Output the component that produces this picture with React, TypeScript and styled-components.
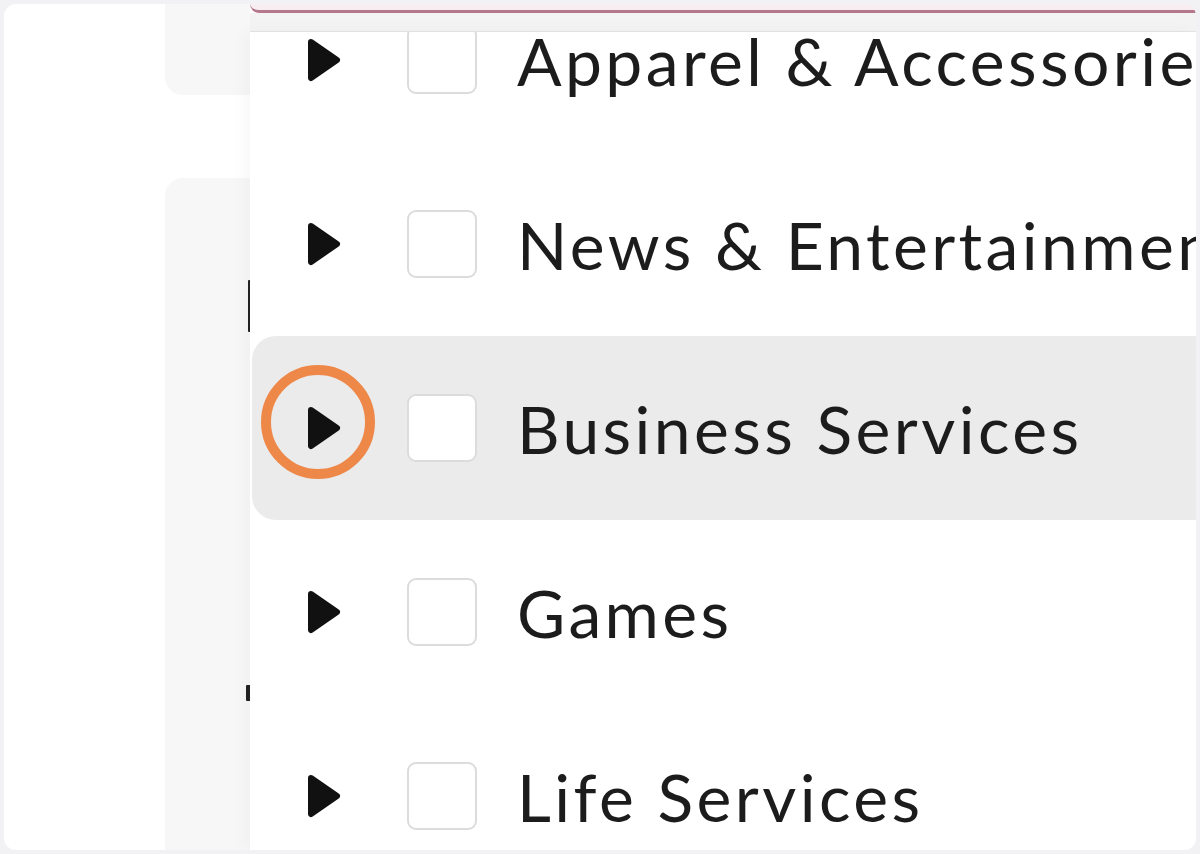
import React from "react";
import styled, { createGlobalStyle } from "styled-components";

const GlobalStyle = createGlobalStyle`
  html, body {
    margin: 0;
    padding: 0;
    background: #f2f1f4;
  }
  *, *::before, *::after {
    box-sizing: border-box;
  }
`;

//#region STYLES
const Frame = styled.div`
  width: 1200px;
  height: 854px;
  padding: 4px;
`;
const Card = styled.div`
  display: flex;
  height: 100%;
  background: #fff;
  border-radius: 12px;
  overflow: hidden;
`;
const Gutter = styled.div`
  width: 161px;
  flex: none;
`;
const Sidebar = styled.div`
  width: 85px;
  flex: none;
  display: flex;
  flex-direction: column;
`;
const SideBlock = styled.div<{ $top?: boolean }>`
  background: #f7f7f8;
  height: ${(p) => (p.$top ? "91px" : "auto")};
  flex: ${(p) => (p.$top ? "none" : "1")};
  margin-top: ${(p) => (p.$top ? "0" : "83px")};
  border-radius: ${(p) => (p.$top ? "0 0 0 18px" : "18px 0 0 0")};
  display: flex;
  flex-direction: column;
  align-items: flex-end;
`;
const Mark = styled.span<{ $h: number; $gap: number; $w?: number; $c?: string }>`
  display: block;
  width: ${(p) => p.$w ?? 4}px;
  height: ${(p) => p.$h}px;
  margin-top: ${(p) => p.$gap}px;
  margin-right: -2px;
  background: ${(p) => p.$c ?? "#222"};
  border-radius: 1px;
`;
const Popup = styled.div`
  flex: 1;
  display: flex;
  flex-direction: column;
  min-width: 0;
`;
const InputEdge = styled.div`
  height: 9px;
  flex: none;
  background: #f8eef2;
  border-bottom: 3px solid #b5778b;
  border-bottom-left-radius: 14px;
`;
const MenuTop = styled.div`
  height: 19px;
  flex: none;
  background: #f4f3f4;
  border-bottom: 1px solid #e4e4e4;
`;
const Menu = styled.div`
  flex: 1;
  overflow: hidden;
  background: #fff;
  box-shadow: -6px 0 16px rgba(0, 0, 0, 0.03);
`;
const List = styled.ul`
  list-style: none;
  margin: -64px 0 0;
  padding: 0;
`;
const Row = styled.li<{ $active?: boolean }>`
  display: flex;
  align-items: center;
  height: 184px;
  margin-left: 2px;
  padding-left: 55px;
  background: ${(p) => (p.$active ? "#ebebeb" : "transparent")};
  border-radius: 24px 0 0 24px;
`;
const Toggle = styled.span<{ $ring?: boolean }>`
  position: relative;
  display: flex;
  align-items: center;
  justify-content: center;
  width: 34px;
  height: 44px;
  flex: none;

  &::after {
    content: "";
    display: ${(p) => (p.$ring ? "block" : "none")};
    position: absolute;
    left: 50%;
    top: 50%;
    width: 114px;
    height: 114px;
    margin: -63px 0 0 -63px;
    border: 10px solid #ee8849;
    border-radius: 50%;
  }
`;
const Checkbox = styled.span`
  width: 70px;
  height: 68px;
  flex: none;
  margin-left: 66px;
  background: #fff;
  border: 2px solid #dcdcdc;
  border-radius: 9px;
`;
const Label = styled.span`
  margin-left: 40px;
  font-family: Lato, "Noto Sans", sans-serif;
  font-size: 66px;
  letter-spacing: 3.4px;
  color: #1c1c1c;
  white-space: nowrap;
`;
//#endregion

const Caret = () => (
  <svg width="34" height="44" viewBox="0 0 34 44">
    <path
      d="M4 4 L30 22 L4 40 Z"
      fill="#111"
      stroke="#111"
      strokeWidth="6"
      strokeLinejoin="round"
    />
  </svg>
);

const categories = [
  "Apparel & Accessories",
  "News & Entertainment",
  "Business Services",
  "Games",
  "Life Services",
];

const App = () => {
  return (
    <>
      <GlobalStyle />
      <Frame>
        <Card>
          <Gutter />
          <Sidebar>
            <SideBlock $top />
            <SideBlock>
              <Mark $h={52} $gap={102} />
              <Mark $h={16} $gap={353} $w={6} />
              <Mark $h={28} $gap={122} $w={2} $c="#bbb" />
            </SideBlock>
          </Sidebar>
          <Popup>
            <InputEdge />
            <MenuTop />
            <Menu>
              <List>
                {categories.map((name) => {
                  const active = name === "Business Services";
                  return (
                    <Row key={name} $active={active}>
                      <Toggle $ring={active}>
                        <Caret />
                      </Toggle>
                      <Checkbox />
                      <Label>{name}</Label>
                    </Row>
                  );
                })}
              </List>
            </Menu>
          </Popup>
        </Card>
      </Frame>
    </>
  );
};

export default App;
